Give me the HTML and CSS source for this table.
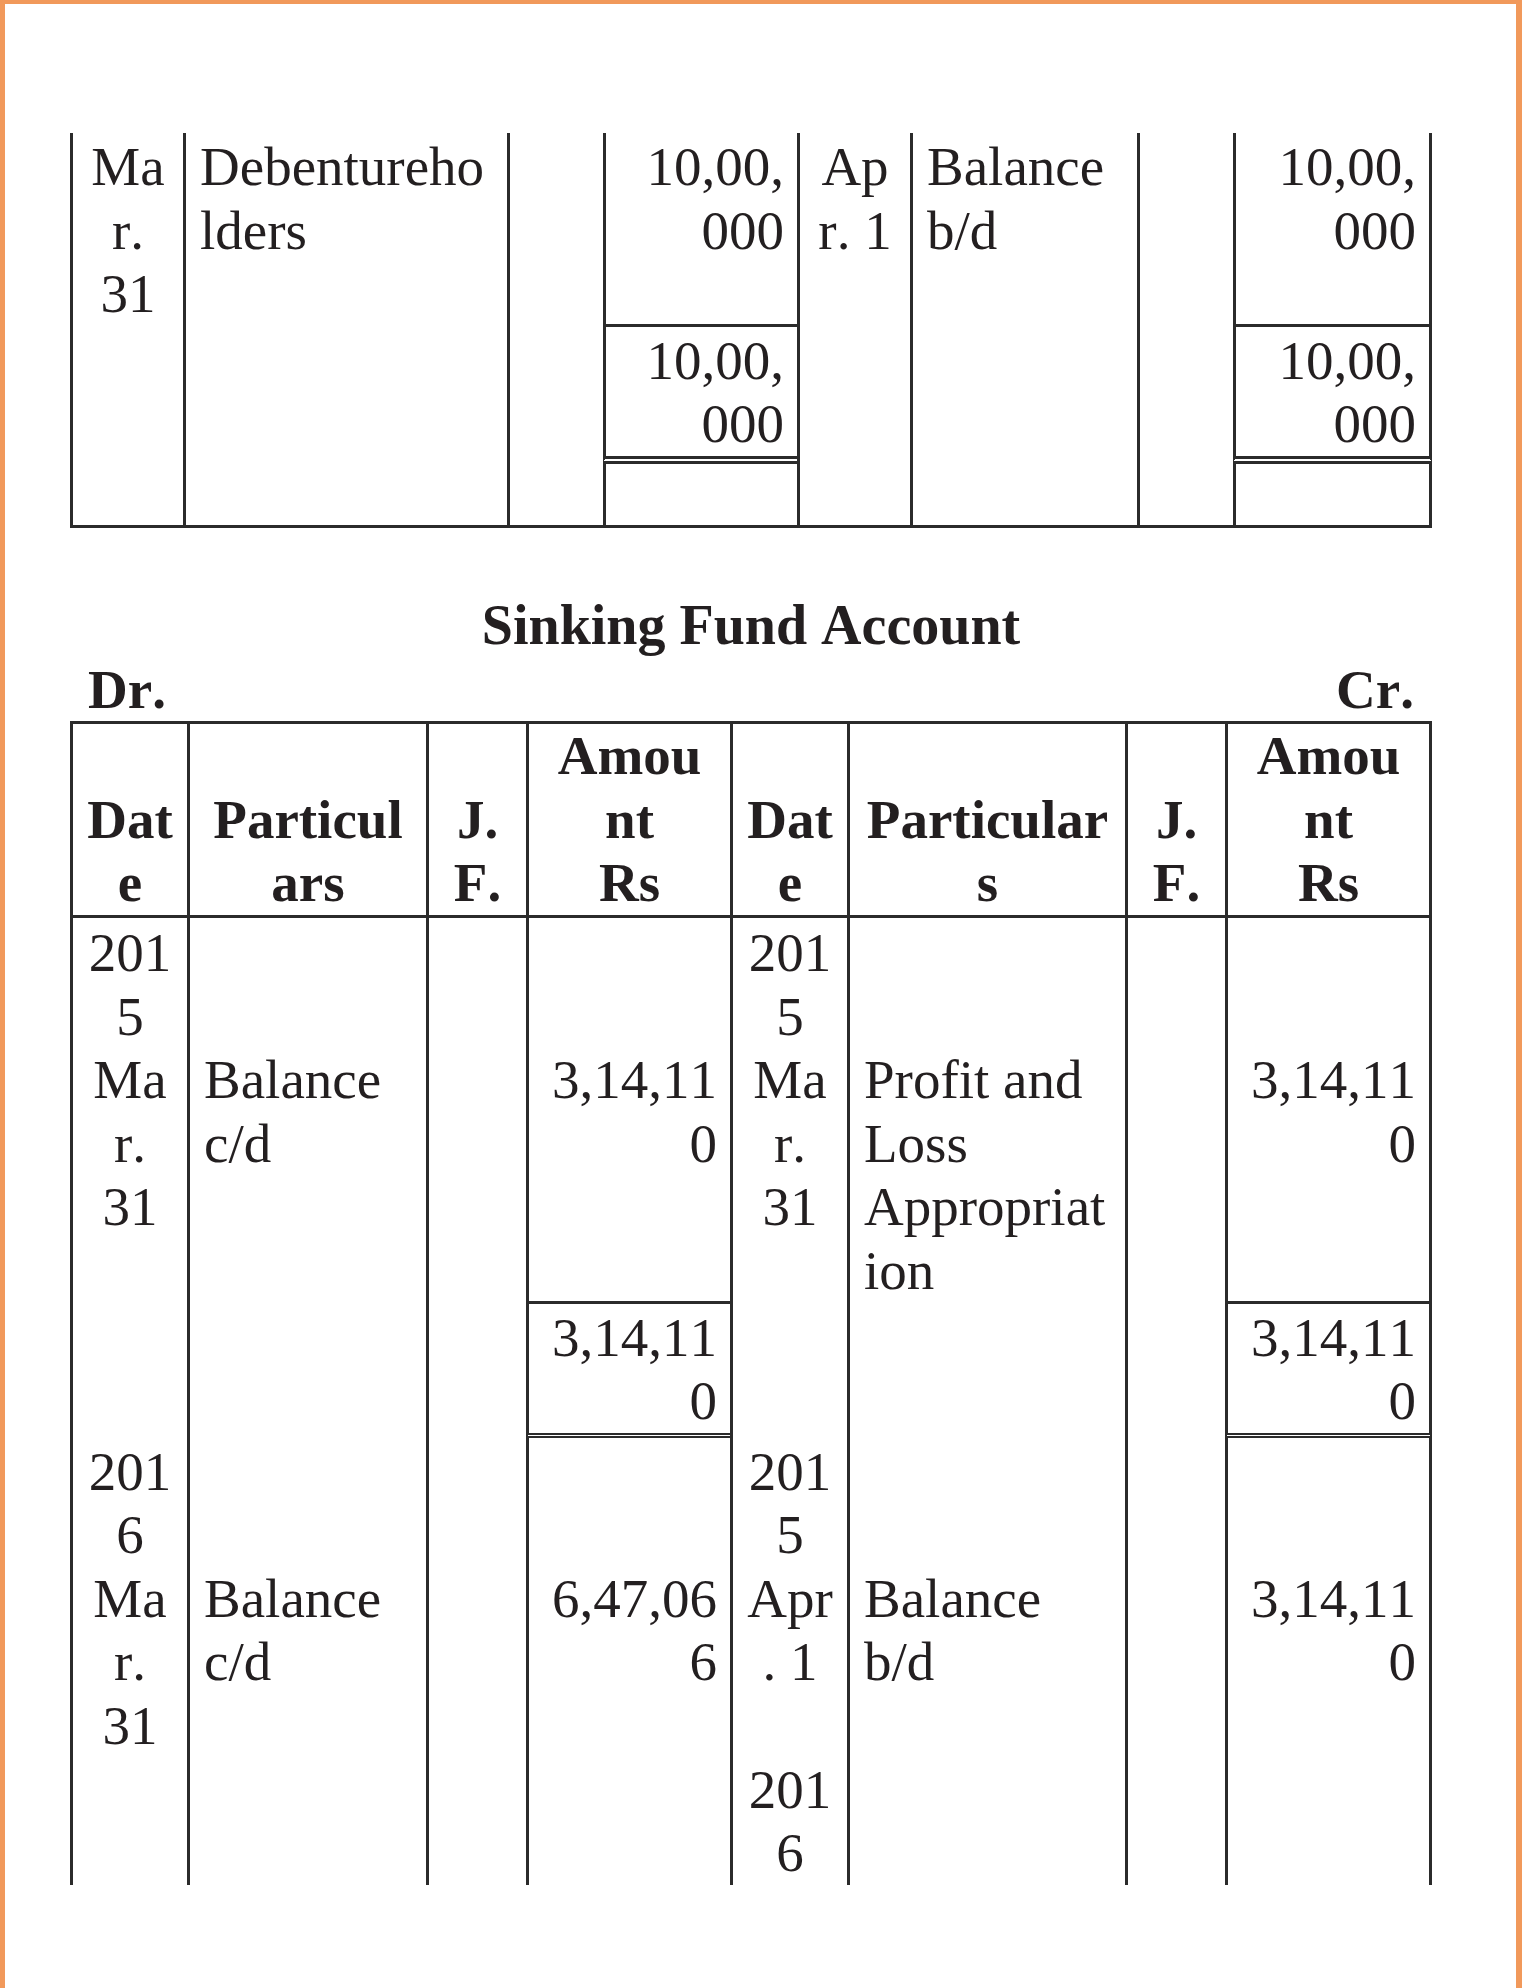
FILE: index.html
```html
<!DOCTYPE html>
<html lang="en">
<head>
<meta charset="utf-8">
<title>Sinking Fund Account</title>
<link rel="stylesheet" href="styles.css">
</head>
<body>
<div class="page">
  <table class="ledger ledger-top">
    <colgroup>
      <col class="t1-date"><col class="t1-part"><col class="t1-jf"><col class="t1-amt">
      <col class="t1-date2"><col class="t1-part2"><col class="t1-jf2"><col class="t1-amt2">
    </colgroup>
    <tbody>
      <tr class="lead">
        <td class="date">Ma<br>r.<br>31</td>
        <td class="part">Debentureho<br>lders</td>
        <td class="jf"></td>
        <td class="amt rule">10,00,<br>000</td>
        <td class="date">Ap<br>r. 1</td>
        <td class="part">Balance<br>b/d</td>
        <td class="jf"></td>
        <td class="amt rule">10,00,<br>000</td>
      </tr>
      <tr class="lead2">
        <td class="date"></td>
        <td class="part"></td>
        <td class="jf"></td>
        <td class="amt double-wide">10,00,<br>000</td>
        <td class="date"></td>
        <td class="part"></td>
        <td class="jf"></td>
        <td class="amt double-wide">10,00,<br>000</td>
      </tr>
      <tr class="end">
        <td class="date"></td>
        <td class="part"></td>
        <td class="jf"></td>
        <td class="amt"></td>
        <td class="date"></td>
        <td class="part"></td>
        <td class="jf"></td>
        <td class="amt"></td>
      </tr>
    </tbody>
  </table>

  <h2 class="title">Sinking Fund Account</h2>
  <div class="drcr"><span>Dr.</span><span>Cr.</span></div>

  <table class="ledger ledger-main">
    <colgroup>
      <col class="t2-date"><col class="t2-part"><col class="t2-jf"><col class="t2-amt">
      <col class="t2-date2"><col class="t2-part2"><col class="t2-jf2"><col class="t2-amt2">
    </colgroup>
    <thead>
      <tr>
        <th>Dat<br>e</th>
        <th>Particul<br>ars</th>
        <th>J.<br>F.</th>
        <th>Amou<br>nt<br>Rs</th>
        <th>Dat<br>e</th>
        <th>Particular<br>s</th>
        <th>J.<br>F.</th>
        <th>Amou<br>nt<br>Rs</th>
      </tr>
    </thead>
    <tbody>
      <tr class="lead3">
        <td class="date">201<br>5</td>
        <td class="part"></td>
        <td class="jf"></td>
        <td class="amt"></td>
        <td class="date">201<br>5</td>
        <td class="part"></td>
        <td class="jf"></td>
        <td class="amt"></td>
      </tr>
      <tr class="tail">
        <td class="date">Ma<br>r.<br>31</td>
        <td class="part">Balance<br>c/d</td>
        <td class="jf"></td>
        <td class="amt rule">3,14,11<br>0</td>
        <td class="date">Ma<br>r.<br>31</td>
        <td class="part">Profit and<br>Loss<br>Appropriat<br>ion</td>
        <td class="jf"></td>
        <td class="amt rule">3,14,11<br>0</td>
      </tr>
      <tr class="lead2">
        <td class="date"></td>
        <td class="part"></td>
        <td class="jf"></td>
        <td class="amt double">3,14,11<br>0</td>
        <td class="date"></td>
        <td class="part"></td>
        <td class="jf"></td>
        <td class="amt double">3,14,11<br>0</td>
      </tr>
      <tr class="lead2">
        <td class="date">201<br>6</td>
        <td class="part"></td>
        <td class="jf"></td>
        <td class="amt"></td>
        <td class="date">201<br>5</td>
        <td class="part"></td>
        <td class="jf"></td>
        <td class="amt"></td>
      </tr>
      <tr>
        <td class="date">Ma<br>r.<br>31</td>
        <td class="part">Balance<br>c/d</td>
        <td class="jf"></td>
        <td class="amt">6,47,06<br>6</td>
        <td class="date">Apr<br>. 1</td>
        <td class="part">Balance<br>b/d</td>
        <td class="jf"></td>
        <td class="amt">3,14,11<br>0</td>
      </tr>
      <tr>
        <td class="date"></td>
        <td class="part"></td>
        <td class="jf"></td>
        <td class="amt"></td>
        <td class="date">201<br>6</td>
        <td class="part"></td>
        <td class="jf"></td>
        <td class="amt"></td>
      </tr>
    </tbody>
  </table>
</div>
</body>
</html>
```

FILE: styles.css
```css
* {
  box-sizing: border-box;
}

html,
body {
  margin: 0;
  padding: 0;
  background: #ffffff;
}

body {
  font-family: "Liberation Serif", "Times New Roman", serif;
  color: #231f20;
  font-kerning: none;
}

.page {
  min-height: 1988px;
  border-top: 4px solid #f1995b;
  border-left: 5px solid #f1995b;
  border-right: 6px solid #f1995b;
  padding: 129px 0 0 65px;
}

/* ---------- ledger tables ---------- */
.ledger {
  border-collapse: separate;
  border-spacing: 0;
  table-layout: fixed;
  width: 1362px;
  font-size: 55px;
  line-height: 63.6px;
}

.ledger td,
.ledger th {
  padding: 0;
  border-left: 3px solid #2b2b2b;
  vertical-align: top;
  white-space: nowrap;
  overflow: visible;
}

.ledger td:last-child,
.ledger th:last-child {
  border-right: 3px solid #2b2b2b;
}

.ledger .date,
.ledger .jf {
  text-align: center;
}

.ledger .part {
  text-align: left;
  padding-left: 14px;
}

.ledger .amt {
  text-align: right;
  padding-right: 13px;
}

.ledger .rule {
  border-bottom: 3px solid #2b2b2b;
}

.ledger .double {
  border-bottom: 5px double #2b2b2b;
}

.ledger .double-wide {
  border-bottom: 8px double #2b2b2b;
}

.ledger .lead td {
  padding-top: 2px;
  padding-bottom: 1px;
}

.ledger .lead2 td {
  padding-top: 2px;
}

.ledger .lead3 td {
  padding-top: 3px;
}

.ledger .tail td {
  padding-bottom: 1px;
}

.ledger .end td {
  height: 64px;
  border-bottom: 3px solid #2b2b2b;
}

/* top (continued) table columns */
.t1-date { width: 113px; }
.t1-part { width: 324px; }
.t1-jf { width: 96px; }
.t1-amt { width: 194px; }
.t1-date2 { width: 113px; }
.t1-part2 { width: 227px; }
.t1-jf2 { width: 96px; }
.t1-amt2 { width: 199px; }

/* main table columns */
.t2-date { width: 117px; }
.t2-part { width: 239px; }
.t2-jf { width: 100px; }
.t2-amt { width: 204px; }
.t2-date2 { width: 117px; }
.t2-part2 { width: 278px; }
.t2-jf2 { width: 100px; }
.t2-amt2 { width: 207px; }

.ledger-main th {
  font-weight: bold;
  text-align: center;
  vertical-align: bottom;
  border-top: 3px solid #2b2b2b;
  border-bottom: 3px solid #2b2b2b;
}

/* ---------- title ---------- */
.title {
  width: 1362px;
  margin: 66px 0 0 0;
  font-size: 56px;
  line-height: 63.6px;
  font-weight: bold;
  text-align: center;
}

.drcr {
  width: 1362px;
  display: flex;
  justify-content: space-between;
  padding: 0 18px;
  font-size: 55px;
  line-height: 63.6px;
  font-weight: bold;
}
```
